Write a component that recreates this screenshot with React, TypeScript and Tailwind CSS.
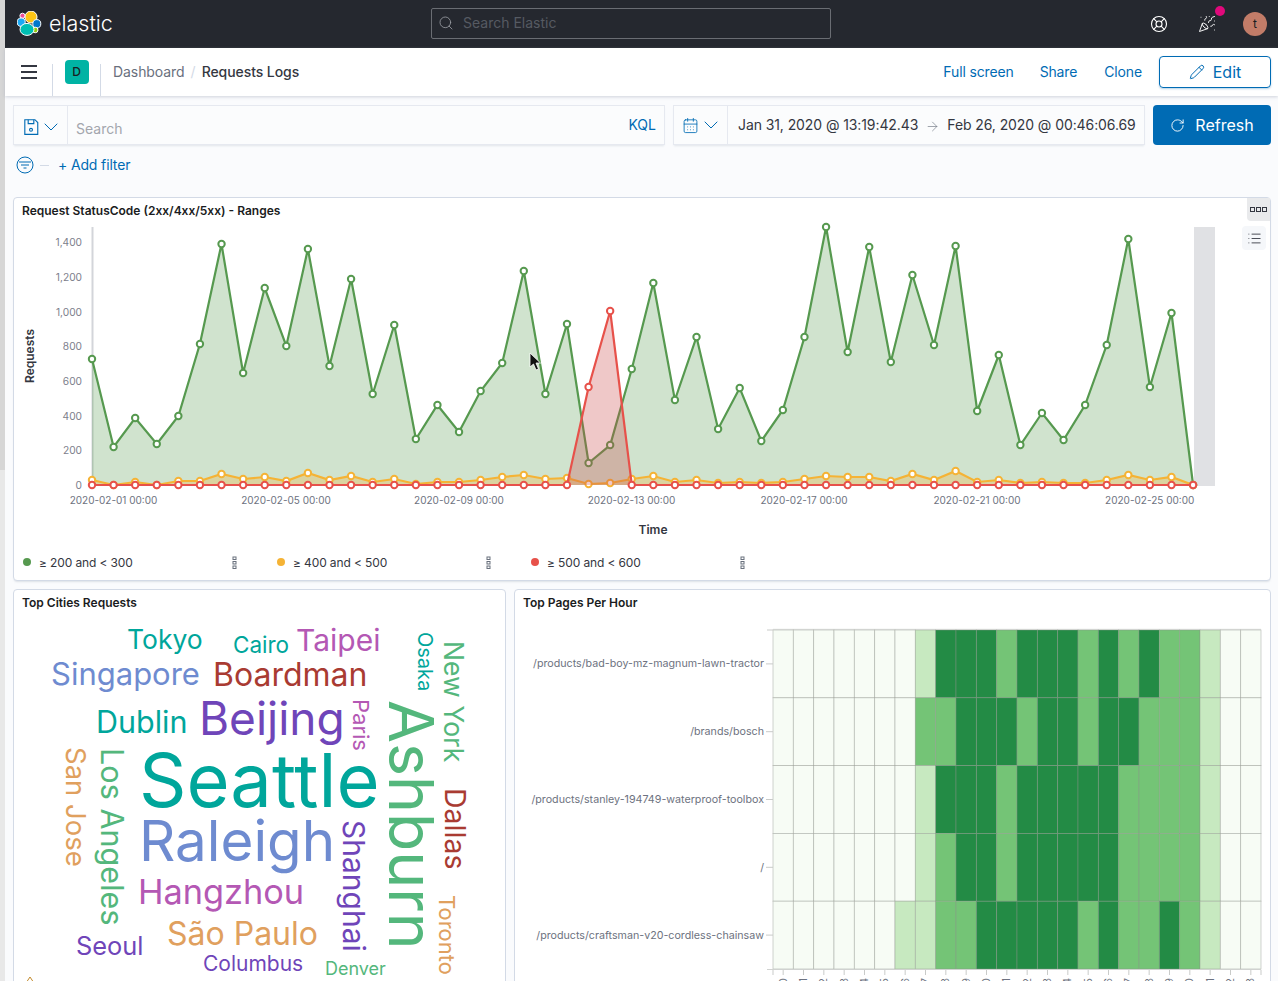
import React from "react";
import {
  Search,
  LifeBuoy,
  PartyPopper,
  Pencil,
  RotateCw,
  CalendarDays,
  ChevronDown,
  ArrowRight,
  List,
} from "lucide-react";

const GREEN = [359, 447, 418, 444, 416, 344, 244, 373, 288, 346, 249, 366, 279, 394, 325, 439, 405, 432, 391, 363, 271, 394, 324, 463, 445, 369, 283, 400, 337, 429, 388, 441, 410, 337, 227, 352, 247, 362, 275, 345, 246, 411, 355, 445, 413, 440, 405, 345, 239, 387, 313, 485];
const ORANGE = [480, 485, 482, 485, 481, 481, 474, 479, 477, 481, 473, 480, 476, 482, 479, 484, 482, 482, 480, 477, 475, 479, 478, 484, 483, 479, 476, 482, 480, 483, 482, 483, 482, 479, 476, 477, 477, 481, 474, 480, 471, 482, 480, 483, 482, 483, 483, 480, 475, 480, 477, 485];
const RED = GREEN.map((_, i) => (i === 23 ? 387 : i === 24 ? 311 : 485));

const xAt = (i: number) => 92 + i * 21.59;
const SERIES = [
  { data: GREEN, color: "#56994f", area: "#56994f", fill: 0.28 },
  { data: ORANGE, color: "#f5b335", area: "#f5b335", fill: 0.3 },
  { data: RED, color: "#e7514a", area: "#c94a4a", fill: 0.3 },
];

const Y_TICKS: [string, number][] = [["1,400", 242], ["1,200", 277], ["1,000", 312], ["800", 346], ["600", 381], ["400", 416], ["200", 450], ["0", 485]];
const X_TICKS: [string, number][] = [["2020-02-01 00:00", 113.5], ["2020-02-05 00:00", 286], ["2020-02-09 00:00", 459], ["2020-02-13 00:00", 631.5], ["2020-02-17 00:00", 804], ["2020-02-21 00:00", 977], ["2020-02-25 00:00", 1149.7]];

const LEGEND = [
  { label: "≥ 200 and < 300", dot: "bg-[#56994f]" },
  { label: "≥ 400 and < 500", dot: "bg-[#f5b335]" },
  { label: "≥ 500 and < 600", dot: "bg-[#e7514a]" },
];

const WORDS: { t: string; x: number; y: number; s: number; c: string; r?: boolean }[] = [
  { t: "Tokyo", x: 127, y: 649, s: 26.5, c: "#00a69b" },
  { t: "Cairo", x: 233, y: 653, s: 22.5, c: "#00a69b" },
  { t: "Taipei", x: 296, y: 651, s: 30, c: "#b458b4" },
  { t: "Singapore", x: 51, y: 685, s: 31, c: "#6e8bd0" },
  { t: "Boardman", x: 213, y: 686, s: 32, c: "#a93b32" },
  { t: "Dublin", x: 96, y: 733, s: 30.5, c: "#00a69b" },
  { t: "Beijing", x: 199, y: 735, s: 46, c: "#6f45b9" },
  { t: "Seattle", x: 139, y: 807, s: 74, c: "#00a69b" },
  { t: "Raleigh", x: 139, y: 861, s: 56.5, c: "#6e8bd0" },
  { t: "Hangzhou", x: 138, y: 904, s: 34.3, c: "#b458b4" },
  { t: "São Paulo", x: 167, y: 945, s: 32, c: "#e0a05e" },
  { t: "Seoul", x: 76, y: 955, s: 25.4, c: "#6f45b9" },
  { t: "Columbus", x: 203, y: 971, s: 21, c: "#6f45b9" },
  { t: "Denver", x: 325, y: 975, s: 18, c: "#54b77c" },
  { t: "Osaka", x: 418, y: 632, s: 20, c: "#00a69b", r: true },
  { t: "New York", x: 444, y: 641, s: 26.6, c: "#54b77c", r: true },
  { t: "Paris", x: 353, y: 699, s: 22, c: "#b458b4", r: true },
  { t: "Ashburn", x: 389, y: 700, s: 62.5, c: "#54b77c", r: true },
  { t: "Dallas", x: 445, y: 788, s: 28.5, c: "#a93b32", r: true },
  { t: "Toronto", x: 439, y: 895, s: 22, c: "#e0a05e", r: true },
  { t: "Shanghai", x: 343, y: 820, s: 30, c: "#6f45b9", r: true },
  { t: "San Jose", x: 66, y: 747, s: 27.5, c: "#e0a05e", r: true },
  { t: "Los Angeles", x: 101, y: 748, s: 30.6, c: "#54b77c", r: true },
];

const HEAT_COLORS = ["#f7fcf5", "#c7e9c0", "#74c476", "#238b45"];
const HEAT_ROWS: { label: string; cells: number[] }[] = [
  { label: "/products/bad-boy-mz-magnum-lawn-tractor", cells: [0, 0, 0, 0, 0, 0, 0, 1, 3, 3, 3, 2, 3, 3, 3, 2, 3, 2, 3, 2, 2, 1, 0, 0] },
  { label: "/brands/bosch", cells: [0, 0, 0, 0, 0, 0, 0, 2, 2, 3, 3, 3, 2, 3, 3, 2, 3, 3, 2, 2, 2, 1, 0, 0] },
  { label: "/products/stanley-194749-waterproof-toolbox", cells: [0, 0, 0, 0, 0, 0, 0, 1, 3, 3, 3, 2, 3, 3, 3, 3, 3, 2, 2, 2, 2, 1, 0, 0] },
  { label: "/", cells: [0, 0, 0, 0, 0, 0, 0, 1, 2, 3, 3, 2, 3, 3, 3, 3, 3, 2, 2, 2, 2, 1, 0, 0] },
  { label: "/products/craftsman-v20-cordless-chainsaw", cells: [0, 0, 0, 0, 0, 0, 1, 1, 2, 2, 3, 3, 3, 3, 3, 2, 3, 2, 2, 3, 2, 1, 0, 0] },
];
const CELL_W = 488 / 24;
const CELL_H = 67.8;

function ElasticLogo() {
  return (
    <svg width="26" height="26" viewBox="0 0 26 26" className="shrink-0">
      <g stroke="#fff" strokeWidth="1">
        <circle cx="5.5" cy="4.8" r="2.6" fill="#f04e98" />
        <circle cx="14" cy="6" r="6" fill="#fec514" />
        <ellipse cx="4.2" cy="11.2" rx="4" ry="4.2" fill="#1ba9f5" />
        <ellipse cx="19.8" cy="12.8" rx="4" ry="4.2" fill="#0077cc" />
        <circle cx="18.2" cy="19" r="2.8" fill="#93c90e" />
        <ellipse cx="10" cy="18.4" rx="7" ry="6" fill="#00bfb3" />
      </g>
    </svg>
  );
}

function SaveIcon() {
  return (
    <svg width="18" height="18" viewBox="0 0 16 16" fill="none" stroke="#006bb4" strokeWidth="1">
      <path d="M2.500 1.500h9l2.500 2.500v10.500h-11.500z" />
      <path d="M5.500 1.500v3.500h5v-3.500" />
      <circle cx="8" cy="10.500" r="1.300" />
    </svg>
  );
}

function FilterCircle() {
  return (
    <svg width="18" height="18" viewBox="0 0 18 18" fill="none" stroke="#006bb4" strokeWidth="1">
      <circle cx="9" cy="9" r="8" />
      <path d="M3 6h12M5 9h8M7.500 12h3" />
    </svg>
  );
}

function Kebab() {
  return (
    <svg width="5" height="14" viewBox="0 0 5 14" fill="none" stroke="#69707d" strokeWidth="1">
      <rect x="1" y="1" width="3" height="2.500" />
      <rect x="1" y="5.500" width="3" height="2.500" />
      <rect x="1" y="10" width="3" height="2.500" />
    </svg>
  );
}

function StatusChart() {
  return (
    <svg width="1256" height="322" viewBox="14 222 1256 322" className="block">
      <rect x="1194" y="227" width="21" height="259" fill="#e0e1e4" />
      <line x1="92.500" y1="227" x2="92.500" y2="486" stroke="#d3d5da" strokeWidth="2" />
      {Y_TICKS.map(([label, y]) => (
        <text key={label} x="82" y={y + 4} textAnchor="end" fontSize="10.200" fill="#7d808c">{label}</text>
      ))}
      {X_TICKS.map(([label, x]) => (
        <text key={label} x={x} y="504" textAnchor="middle" fontSize="10" fill="#6d7280">{label}</text>
      ))}
      <text x="653" y="534" textAnchor="middle" fontSize="12" fontWeight="600" fill="#343741">Time</text>
      <text transform="translate(34 356) rotate(-90)" textAnchor="middle" fontSize="12" fontWeight="600" fill="#343741">Requests</text>
      {SERIES.map((s) => {
        const pts = s.data.map((y, i) => `${xAt(i).toFixed(1)},${y}`).join(" ");
        return (
          <g key={s.color}>
            <polygon points={`92,485 ${pts} ${xAt(51).toFixed(1)},485`} fill={s.area} fillOpacity={s.fill} />
            <polyline points={pts} fill="none" stroke={s.color} strokeWidth="2.200" />
            {s.data.map((y, i) => (
              <circle key={i} cx={xAt(i)} cy={y} r="3.200" fill="#fff" stroke={s.color} strokeWidth="2" />
            ))}
          </g>
        );
      })}
      <path d="M530 353v14l3.500-3 2.500 6 2.500-1-2.500-6h4.500z" fill="#111" stroke="#fff" strokeWidth="0.800" />
    </svg>
  );
}

function WordCloud() {
  return (
    <svg width="491" height="367" viewBox="14 614 491 367" className="block">
      {WORDS.map((w) => (
        <text
          key={w.t}
          x={w.r ? 0 : w.x}
          y={w.r ? 0 : w.y}
          transform={w.r ? `translate(${w.x} ${w.y}) rotate(90)` : undefined}
          fontSize={w.s}
          fill={w.c}
        >
          {w.t}
        </text>
      ))}
      <path d="M30 977l-4 6h8z" fill="none" stroke="#c28a2c" strokeWidth="1" />
    </svg>
  );
}

function Heatmap() {
  return (
    <svg width="755" height="367" viewBox="515 614 755 367" className="block">
      <line x1="773" y1="629.500" x2="1261" y2="629.500" stroke="#e4e5e4" strokeWidth="1.500" />
      {HEAT_ROWS.map((row, r) => {
        const y = 630 + r * CELL_H;
        return (
          <g key={row.label}>
            {row.cells.map((level, c) => (
              <rect key={c} x={773 + c * CELL_W} y={y} width={CELL_W} height={CELL_H} fill={HEAT_COLORS[level]} stroke="#8f948c" strokeOpacity="0.5" strokeWidth="0.800" />
            ))}
            <line x1="766" y1={y + CELL_H / 2} x2="773" y2={y + CELL_H / 2} stroke="#c9cbc9" />
            <text x="764" y={y + CELL_H / 2 + 3.500} textAnchor="end" fontSize="10.700" fill="#6d7280">{row.label}</text>
          </g>
        );
      })}
      <line x1="767" y1="969.500" x2="1261" y2="969.500" stroke="#d0d2d0" />
      <line x1="767" y1="630" x2="773" y2="630" stroke="#c9cbc9" />
      <line x1="773" y1="970" x2="773" y2="975" stroke="#c9cbc9" />
      <line x1="1261" y1="970" x2="1261" y2="975" stroke="#c9cbc9" />
      {HEAT_ROWS[0].cells.map((_, c) => {
        const x = 773 + (c + 0.5) * CELL_W;
        return (
          <g key={c}>
            <line x1={x} y1="970" x2={x} y2="975" stroke="#c9cbc9" />
            <text transform={`translate(${x + 3.500} 978) rotate(-90)`} textAnchor="end" fontSize="10.500" fill="#6d7280">
              {String(c).padStart(2, "0")}
            </text>
          </g>
        );
      })}
    </svg>
  );
}

export default function App() {
  return (
    <div className="flex h-[981px] w-[1278px] overflow-hidden bg-[#fafbfd] font-[Inter,sans-serif]">
      <div className="flex w-[5px] shrink-0 flex-col">
        <div className="h-[470px] bg-[#d6d6d6]" />
        <div className="flex-1 bg-[#e8e8e8]" />
      </div>

      <div className="flex min-w-0 flex-1 flex-col">
        <header className="flex h-12 shrink-0 items-center bg-[#25282f] pl-3">
          <ElasticLogo />
          <span className="ml-[6px] w-[382px] text-[21.500px] font-light leading-none text-white">elastic</span>
          <div className="mb-[2px] flex h-[31px] w-[400px] items-center gap-[9px] rounded-[2px] border border-[#6a6d73] pl-[6px]">
            <Search size={16} strokeWidth={1.250} className="text-[#9a9da3]" />
            <span className="text-sm text-[#565a62]">Search Elastic</span>
          </div>
          <LifeBuoy size={18} strokeWidth={1.500} className="ml-[319px] text-white" />
          <div className="relative ml-[30px]">
            <PartyPopper size={18} strokeWidth={1.250} className="text-white" />
            <span className="absolute -right-[9px] -top-[9px] h-[10px] w-[10px] rounded-full bg-[#e0097b]" />
          </div>
          <div className="ml-[27px] flex h-6 w-6 items-center justify-center rounded-full bg-[#c27c68] text-xs text-[#1a1c21]">t</div>
        </header>

        <nav className="flex h-12 shrink-0 items-center bg-white shadow-[0_1px_3px_rgba(152,162,179,0.45)]">
          <div className="flex h-8 w-[48px] items-center justify-center self-end border-r border-[#d3dae6]">
            <div className="-mt-[16px] flex w-4 flex-col gap-[4px]">
              <span className="h-[2px] bg-[#343741]" />
              <span className="h-[2px] bg-[#343741]" />
              <span className="h-[2px] bg-[#343741]" />
            </div>
          </div>
          <div className="flex h-8 w-[48px] items-center justify-center self-end border-r border-[#d3dae6]">
            <div className="-mt-[16px] flex h-6 w-6 items-center justify-center rounded-[4px] bg-[#00b3a4] text-xs font-medium text-[#1a1c21]">D</div>
          </div>
          <span className="ml-[12px] text-sm tracking-[-0.005em] text-[#69707d]">Dashboard</span>
          <span className="mx-[6px] text-sm text-[#d3dae6]">/</span>
          <span className="text-sm font-medium tracking-[-0.005em] text-[#343741]">Requests Logs</span>
          <div className="ml-auto flex items-center text-sm tracking-[-0.01em] text-[#006bb4]">
            <span>Full screen</span>
            <span className="ml-[26px]">Share</span>
            <span className="ml-[27px]">Clone</span>
            <button className="ml-[17px] mr-[7px] flex h-8 w-[112px] items-center justify-center gap-[8px] rounded-[4px] border border-[#006bb4] text-base tracking-normal shadow-[0_1px_2px_rgba(0,107,180,0.3)]">
              <Pencil size={16} strokeWidth={1.500} />
              Edit
            </button>
          </div>
        </nav>

        <div className="mt-[9px] flex h-10 shrink-0 pl-2 pr-[7px]">
          <div className="flex w-[652px] items-stretch border border-[#e6e9f0] bg-[#fbfcfd] shadow-[0_2px_2px_-1px_rgba(152,162,179,0.25)]">
            <div className="flex w-[54px] items-center justify-center border-r border-[#e6e9f0] pt-[4px]">
              <SaveIcon />
              <ChevronDown size={24} strokeWidth={1} className="-ml-[1px] -mr-[3px] text-[#006bb4]" />
            </div>
            <span className="ml-2 mt-[13px] text-sm leading-5 text-[#a3a6ad]">Search</span>
            <span className="ml-auto mr-2 mt-[9px] text-sm leading-5 text-[#006bb4]">KQL</span>
          </div>
          <div className="ml-2 flex w-[472px] items-stretch border border-[#e6e9f0] bg-[#fbfcfd] shadow-[0_2px_2px_-1px_rgba(152,162,179,0.25)]">
            <div className="flex w-[54px] items-center justify-center border-r border-[#e6e9f0]">
              <CalendarDays size={17} strokeWidth={1.200} className="text-[#006bb4]" />
              <ChevronDown size={24} strokeWidth={1} className="-mr-[3px] text-[#006bb4]" />
            </div>
            <div className="flex flex-1 items-center pl-[10px] text-sm tracking-[-0.09px] text-[#343741]">
              <span>Jan 31, 2020 @ 13:19:42.43</span>
              <ArrowRight size={15} strokeWidth={1} className="mx-[7px] mt-[2px] text-[#69707d]" />
              <span>Feb 26, 2020 @ 00:46:06.69</span>
            </div>
          </div>
          <button className="ml-2 flex w-[118px] items-center justify-center gap-[10px] rounded-[4px] bg-[#006bb4] text-base text-white">
            <RotateCw size={15} strokeWidth={1.500} />
            Refresh
          </button>
        </div>

        <div className="flex h-10 shrink-0 items-center pl-[11px]">
          <FilterCircle />
          <span className="ml-[6px] h-px w-[9px] bg-[#d3dae6]" />
          <span className="ml-[9px] text-sm tracking-[-0.01em] text-[#006bb4]">+ Add filter</span>
        </div>

        <section className="relative ml-[8px] mt-[12px] h-[384px] w-[1258px] shrink-0 rounded-[4px] border border-[#d3dae6] bg-white shadow-[0_2px_2px_-1px_rgba(152,162,179,0.3)]">
          <div className="flex h-6 items-center px-[8px] pt-[2px] text-xs font-semibold text-[#1a1c21]">Request StatusCode (2xx/4xx/5xx) - Ranges</div>
          <div className="absolute right-0 top-0 flex h-[23px] w-[23px] items-center justify-center gap-[1px] rounded-bl-[4px] bg-[#e9eaec]">
            <span className="h-[5px] w-[5px] border border-[#343741]" />
            <span className="h-[5px] w-[5px] border border-[#343741]" />
            <span className="h-[5px] w-[5px] border border-[#343741]" />
          </div>
          <div className="absolute right-[4px] top-[28px] flex h-6 w-6 items-center justify-center rounded-[4px] bg-[#f5f7fa]">
            <List size={15} strokeWidth={1.400} className="text-[#343741]" />
          </div>
          <StatusChart />
          <div className="flex pl-[9px] pt-[3px]">
            {LEGEND.map((item) => (
              <div key={item.label} className="flex h-8 w-[254px] items-center">
                <span className={`mb-[2px] h-2 w-2 rounded-full ${item.dot}`} />
                <span className="ml-2 w-[193px] text-xs tracking-[-0.01em] text-[#343741]">{item.label}</span>
                <Kebab />
              </div>
            ))}
          </div>
        </section>

        <div className="ml-[8px] mt-[8px] flex shrink-0 gap-2">
          <section className="h-[420px] w-[493px] shrink-0 rounded-[4px] border border-[#d3dae6] bg-white">
            <div className="flex h-6 items-center px-[8px] pt-[2px] text-xs font-semibold text-[#1a1c21]">Top Cities Requests</div>
            <WordCloud />
          </section>
          <section className="h-[420px] w-[757px] shrink-0 rounded-[4px] border border-[#d3dae6] bg-white">
            <div className="flex h-6 items-center px-[8px] pt-[2px] text-xs font-semibold text-[#1a1c21]">Top Pages Per Hour</div>
            <Heatmap />
          </section>
        </div>
      </div>
    </div>
  );
}
